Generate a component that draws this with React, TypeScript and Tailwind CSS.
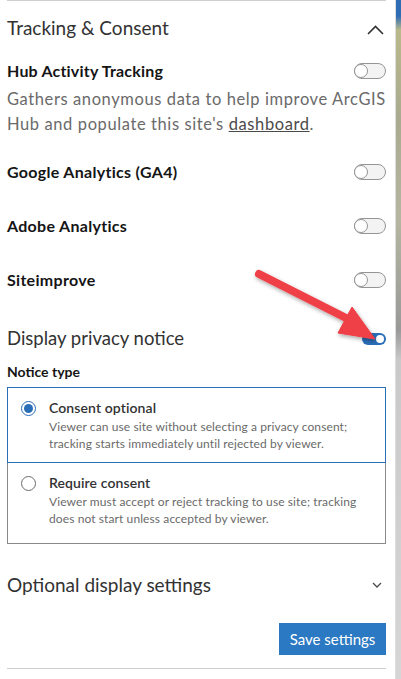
import React, { useState } from "react";

const font = { fontFamily: "Lato, 'Open Sans', sans-serif" };

const Toggle = ({ on, onClick }: { on?: boolean; onClick?: () => void }) =>
  on ? (
    <button
      onClick={onClick}
      className="w-[24px] h-[12px] rounded-full bg-[#2b6eb8] flex items-center justify-end pr-[2px]"
    >
      <span className="w-[8px] h-[8px] rounded-full bg-white" />
    </button>
  ) : (
    <button
      onClick={onClick}
      className="w-[32px] h-[16px] rounded-full bg-[#f3f3f3] border border-[#959595] flex items-center"
    >
      <span className="w-[14px] h-[14px] -ml-px rounded-full bg-white border border-[#959595]" />
    </button>
  );

const ChevronUp = () => (
  <svg width="17" height="10" viewBox="0 0 17 10" fill="none">
    <path d="M1 9 L8.5 1.5 L16 9" stroke="#323232" strokeWidth="1.6" />
  </svg>
);

const ChevronDown = () => (
  <svg width="10" height="6" viewBox="0 0 10 6" fill="none">
    <path d="M1 1 L5 5 L9 1" stroke="#4a4a4a" strokeWidth="1.3" />
  </svg>
);

const Radio = ({ checked }: { checked?: boolean }) =>
  checked ? (
    <span className="w-[15px] h-[15px] rounded-full border-[1.5px] border-[#2b6eb8] flex items-center justify-center shrink-0">
      <span className="w-[9px] h-[9px] rounded-full bg-[#2b6eb8]" />
    </span>
  ) : (
    <span className="w-[15px] h-[15px] rounded-full border-[1.5px] border-[#6a6a6a] bg-white shrink-0" />
  );

const OptionCard = ({
  checked,
  title,
  desc,
  onClick,
  last,
}: {
  checked?: boolean;
  title: string;
  desc: string;
  onClick: () => void;
  last?: boolean;
}) => (
  <div
    onClick={onClick}
    className={`flex gap-[13px] pl-[13px] pr-3 pt-[10px] border cursor-pointer ${last ? "pb-[16px]" : "pb-[10px]"} ${
      checked ? "border-[#2b6eb8] relative z-10" : "border-[#8a8a8a]"
    } ${last ? "-mt-px" : ""}`}
  >
    <div className="h-[20px] flex items-center">
      <Radio checked={checked} />
    </div>
    <div>
      <div className="h-[20px] leading-[20px] text-[14px] font-semibold tracking-[0.1px] text-[#323232]">{title}</div>
      <div className="text-[12px] leading-[17px] tracking-[0.1px] text-[#6a6a6a]">{desc}</div>
    </div>
  </div>
);

const ToolRow = ({ label }: { label: string }) => {
  const [on, setOn] = useState(false);
  return (
    <div className="h-[54px] flex items-center justify-between">
      <span className="text-[16px] font-bold tracking-[0.3px] text-[#151515]">{label}</span>
      <Toggle on={on} onClick={() => setOn(!on)} />
    </div>
  );
};

export default function App() {
  const [notice, setNotice] = useState(true);
  const [type, setType] = useState("optional");
  const [hub, setHub] = useState(false);

  return (
    <div className="flex w-[401px] h-[679px] bg-white overflow-hidden" style={font}>
      <div className="relative w-[396px] pl-[7px] pr-[9px] border-r border-[#dcdcdc]">
        <div className="border-t border-[#cfcfcf]" />
        <div className="h-[54px] flex items-center justify-between">
          <span className="text-[19px] text-[#323232]">Tracking &amp; Consent</span>
          <span className="pr-[2px] pt-[3px]">
            <ChevronUp />
          </span>
        </div>

        <div className="h-[32px] flex items-center justify-between">
          <span className="text-[16px] font-bold tracking-[0.2px] text-[#151515]">Hub Activity Tracking</span>
          <Toggle on={hub} onClick={() => setHub(!hub)} />
        </div>
        <p className="text-[16.5px] leading-[25px] tracking-[0.6px] text-[#6a6a6a] whitespace-nowrap">
          Gathers anonymous data to help improve ArcGIS
          <br />
          Hub and populate this site's{" "}
          <a href="#" className="underline text-[#4a4a4a]">
            dashboard
          </a>
          .
        </p>

        <div className="mt-[8px]">
          <ToolRow label="Google Analytics (GA4)" />
          <ToolRow label="Adobe Analytics" />
          <ToolRow label="Siteimprove" />
        </div>

        <div className="mt-[15px] h-[34px] flex items-center justify-between">
          <span className="text-[18.5px] text-[#323232]">Display privacy notice</span>
          <Toggle on={notice} onClick={() => setNotice(!notice)} />
        </div>

        <div className="mt-[5px] h-[20px] flex items-center text-[14px] font-bold text-[#151515]">
          Notice type
        </div>

        <div className="mt-[6px] flex flex-col">
          <OptionCard
            checked={type === "optional"}
            title="Consent optional"
            desc="Viewer can use site without selecting a privacy consent; tracking starts immediately until rejected by viewer."
            onClick={() => setType("optional")}
          />
          <OptionCard
            last
            checked={type === "required"}
            title="Require consent"
            desc="Viewer must accept or reject tracking to use site; tracking does not start unless accepted by viewer."
            onClick={() => setType("required")}
          />
        </div>

        <div className="mt-[21px] h-[40px] flex items-center justify-between">
          <span className="text-[19px] text-[#323232]">Optional display settings</span>
          <span className="pr-[4px]">
            <ChevronDown />
          </span>
        </div>

        <div className="mt-[18px] flex justify-end">
          <button className="h-[32px] w-[107px] bg-[#2b79c2] text-white text-[15px]">Save settings</button>
        </div>

        <div className="mt-[13px] border-t border-[#cfcfcf]" />

        <svg className="absolute left-0 top-0 pointer-events-none" width="396" height="360" viewBox="0 0 396 360">
          <defs>
            <filter id="sh" x="-20%" y="-20%" width="140%" height="140%">
              <feDropShadow dx="1" dy="2" stdDeviation="2" floodColor="#000" floodOpacity="0.35" />
            </filter>
          </defs>
          <g filter="url(#sh)" fill="#ef3f46" stroke="#ef3f46">
            <line x1="259" y1="274" x2="350" y2="320" strokeWidth="8" strokeLinecap="round" />
            <polygon points="338,333 352,307 375,339" strokeWidth="1" strokeLinejoin="round" />
          </g>
        </svg>
      </div>
      <div className="flex-1 bg-[linear-gradient(180deg,#2e6db4_0px,#2e6db4_16px,#b9b98a_30px,#a9ab90_120px,#b4b6a0_220px,#999_330px,#c9c9c9_360px,#d6d6d6_679px)]" />
    </div>
  );
}
